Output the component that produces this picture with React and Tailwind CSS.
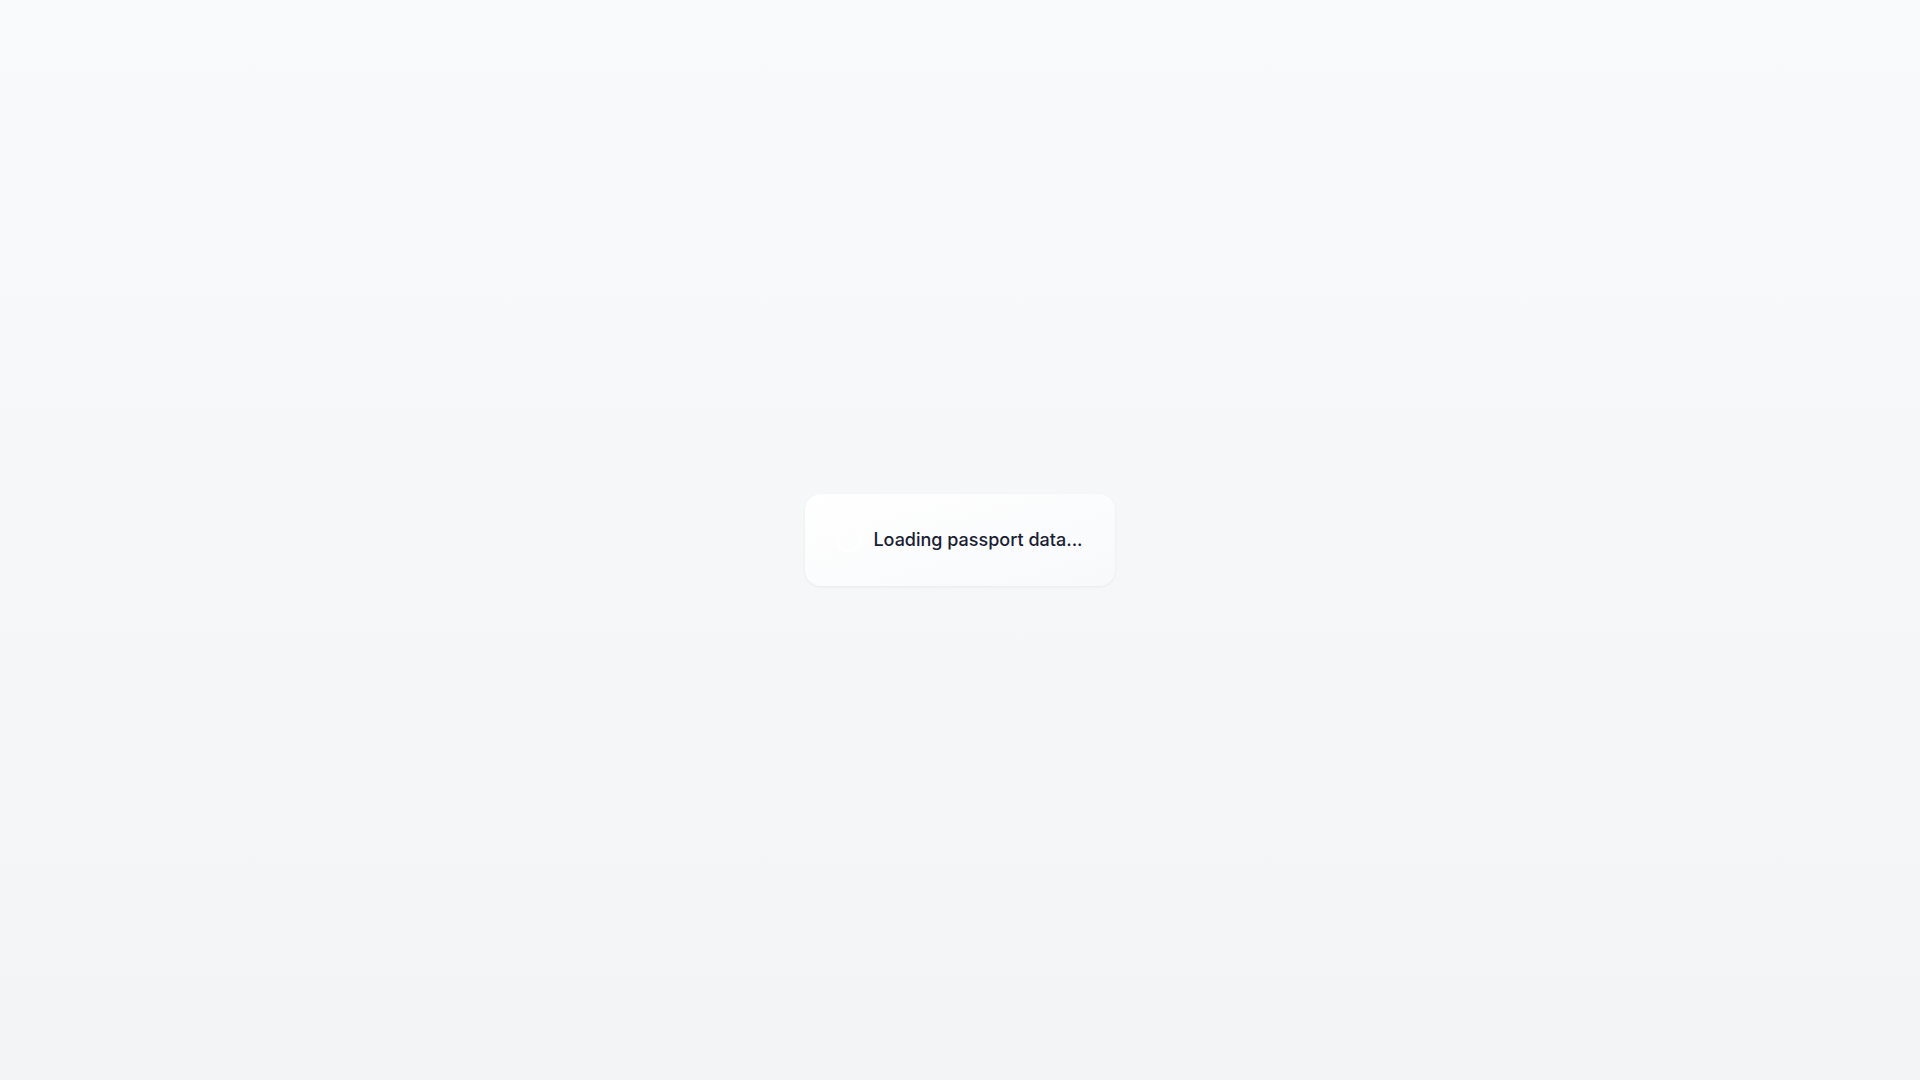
export default function App() {
  return (
    <div
      className="min-h-screen w-full flex items-center justify-center bg-gradient-to-b from-[#f9fafb] to-[#f3f4f6]"
      style={{ fontFamily: "Inter, 'Noto Sans', sans-serif" }}
    >
      <div className="flex items-center gap-3 rounded-2xl bg-gradient-to-br from-white to-[#f8f9fb] px-8 py-8 shadow-[0_1px_3px_rgba(0,0,0,0.06)]">
        <div className="h-6 w-6 rounded-full border-2 border-white border-t-white/0" />
        <span className="text-lg leading-7 font-medium text-[#1a2033]">Loading passport data...</span>
      </div>
    </div>
  );
}
